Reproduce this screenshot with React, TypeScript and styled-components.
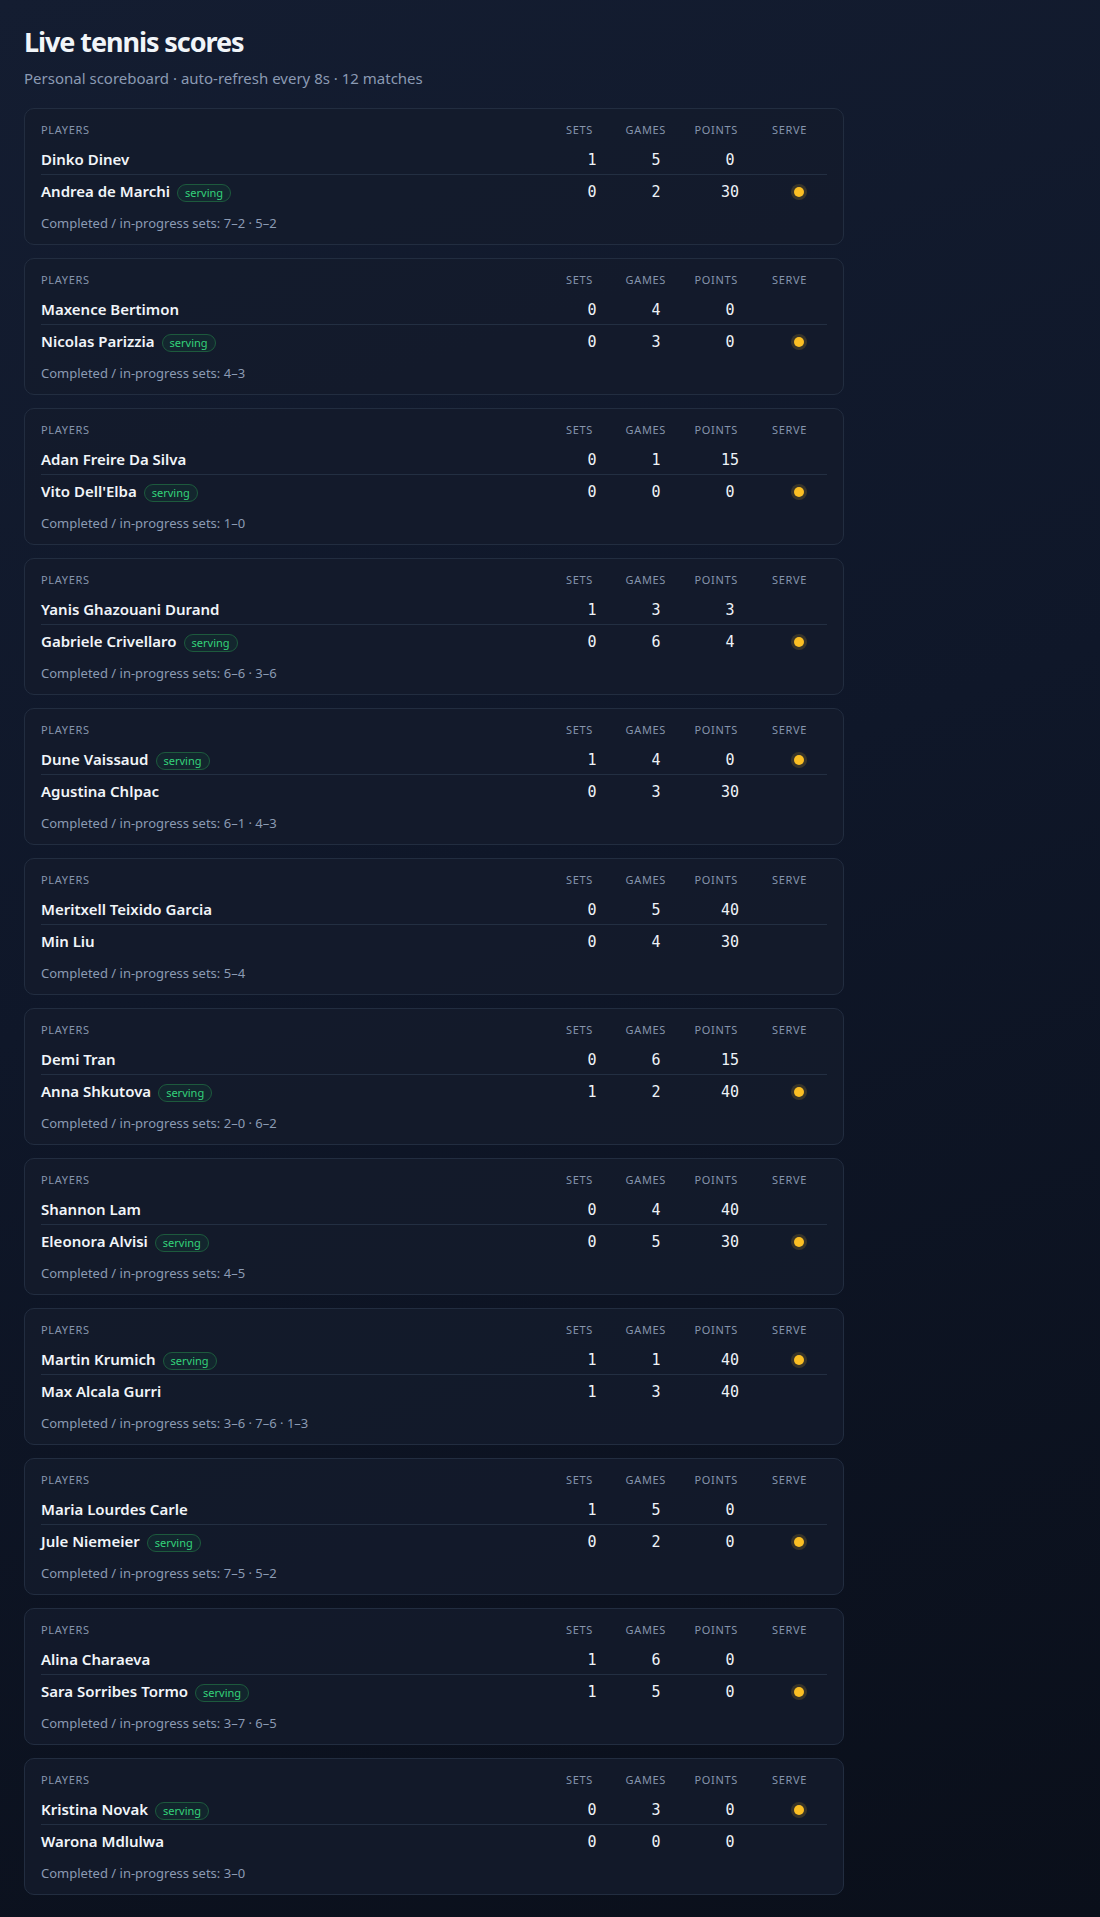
import styled, { createGlobalStyle } from "styled-components";

interface Player {
  name: string;
  sets: number;
  games: number;
  points: string;
  serving?: boolean;
}

interface Match {
  id: number;
  players: [Player, Player];
  setScores: string[];
}

const matches: Match[] = [
  {
    id: 1,
    players: [
      { name: "Dinko Dinev", sets: 1, games: 5, points: "0" },
      { name: "Andrea de Marchi", sets: 0, games: 2, points: "30", serving: true },
    ],
    setScores: ["7–2", "5–2"],
  },
  {
    id: 2,
    players: [
      { name: "Maxence Bertimon", sets: 0, games: 4, points: "0" },
      { name: "Nicolas Parizzia", sets: 0, games: 3, points: "0", serving: true },
    ],
    setScores: ["4–3"],
  },
  {
    id: 3,
    players: [
      { name: "Adan Freire Da Silva", sets: 0, games: 1, points: "15" },
      { name: "Vito Dell'Elba", sets: 0, games: 0, points: "0", serving: true },
    ],
    setScores: ["1–0"],
  },
  {
    id: 4,
    players: [
      { name: "Yanis Ghazouani Durand", sets: 1, games: 3, points: "3" },
      { name: "Gabriele Crivellaro", sets: 0, games: 6, points: "4", serving: true },
    ],
    setScores: ["6–6", "3–6"],
  },
  {
    id: 5,
    players: [
      { name: "Dune Vaissaud", sets: 1, games: 4, points: "0", serving: true },
      { name: "Agustina Chlpac", sets: 0, games: 3, points: "30" },
    ],
    setScores: ["6–1", "4–3"],
  },
  {
    id: 6,
    players: [
      { name: "Meritxell Teixido Garcia", sets: 0, games: 5, points: "40" },
      { name: "Min Liu", sets: 0, games: 4, points: "30" },
    ],
    setScores: ["5–4"],
  },
  {
    id: 7,
    players: [
      { name: "Demi Tran", sets: 0, games: 6, points: "15" },
      { name: "Anna Shkutova", sets: 1, games: 2, points: "40", serving: true },
    ],
    setScores: ["2–0", "6–2"],
  },
  {
    id: 8,
    players: [
      { name: "Shannon Lam", sets: 0, games: 4, points: "40" },
      { name: "Eleonora Alvisi", sets: 0, games: 5, points: "30", serving: true },
    ],
    setScores: ["4–5"],
  },
  {
    id: 9,
    players: [
      { name: "Martin Krumich", sets: 1, games: 1, points: "40", serving: true },
      { name: "Max Alcala Gurri", sets: 1, games: 3, points: "40" },
    ],
    setScores: ["3–6", "7–6", "1–3"],
  },
  {
    id: 10,
    players: [
      { name: "Maria Lourdes Carle", sets: 1, games: 5, points: "0" },
      { name: "Jule Niemeier", sets: 0, games: 2, points: "0", serving: true },
    ],
    setScores: ["7–5", "5–2"],
  },
  {
    id: 11,
    players: [
      { name: "Alina Charaeva", sets: 1, games: 6, points: "0" },
      { name: "Sara Sorribes Tormo", sets: 1, games: 5, points: "0", serving: true },
    ],
    setScores: ["3–7", "6–5"],
  },
  {
    id: 12,
    players: [
      { name: "Kristina Novak", sets: 0, games: 3, points: "0", serving: true },
      { name: "Warona Mdlulwa", sets: 0, games: 0, points: "0" },
    ],
    setScores: ["3–0"],
  },
];

const GlobalStyle = createGlobalStyle`
  * {
    box-sizing: border-box;
  }

  html,
  body {
    margin: 0;
    min-height: 100%;
    background: #0b1120;
  }

  body {
    font-family: "Noto Sans", "Open Sans", sans-serif;
    color: #e2e8f0;
    background: linear-gradient(160deg, #141d31 0%, #0f1729 45%, #0a0f1a 100%);
    min-height: 100vh;
  }
`;

const App = () => {
  return (
    <>
      <GlobalStyle />
      <Page>
        <Header>
          <Title>Live tennis scores</Title>
          <Subtitle>
            Personal scoreboard · auto-refresh every 8s · {matches.length} matches
          </Subtitle>
        </Header>

        <MatchList>
          {matches.map((match) => (
            <MatchCard key={match.id}>
              <HeadRow>
                <HeadCell $align="left">Players</HeadCell>
                <HeadCell>Sets</HeadCell>
                <HeadCell>Games</HeadCell>
                <HeadCell>Points</HeadCell>
                <HeadCell>Serve</HeadCell>
              </HeadRow>

              {match.players.map((player, i) => (
                <PlayerRow key={player.name} $divider={i === 0}>
                  <NameCell>
                    <PlayerName>{player.name}</PlayerName>
                    {player.serving && <ServingBadge>serving</ServingBadge>}
                  </NameCell>
                  <Score>{player.sets}</Score>
                  <Score>{player.games}</Score>
                  <Score>{player.points}</Score>
                  <ServeCell>{player.serving && <ServeDot />}</ServeCell>
                </PlayerRow>
              ))}

              <SetsLine>
                Completed / in-progress sets: {match.setScores.join(" · ")}
              </SetsLine>
            </MatchCard>
          ))}
        </MatchList>
      </Page>
    </>
  );
};

export default App;

const Page = styled.div`
  max-width: 868px;
  padding: 25px 24px 24px;
`;

const Header = styled.header`
  margin-bottom: 20px;
`;

const Title = styled.h1`
  margin: 0 0 9px;
  font-size: 27px;
  line-height: 34px;
  font-weight: 700;
  color: #f1f5f9;
  letter-spacing: -0.04em;
`;

const Subtitle = styled.p`
  margin: 0;
  font-size: 15px;
  line-height: 20px;
  color: #8b9ab3;
`;

const MatchList = styled.div`
  display: flex;
  flex-direction: column;
  gap: 13px;
`;

const MatchCard = styled.section`
  background: rgba(20, 27, 44, 0.85);
  border: 1px solid #222d40;
  border-radius: 10px;
  padding: 13px 16px 12px;
`;

/* headers sit right-aligned, scores are centred under them */
const HeadRow = styled.div`
  display: grid;
  grid-template-columns: 1fr 60px 73px 72px 69px;
  padding-right: 20px;
  margin-bottom: 5px;
`;

const HeadCell = styled.div<{ $align?: "left" | "right" }>`
  text-align: ${({ $align }) => $align ?? "right"};
  font-size: 11px;
  line-height: 16px;
  text-transform: uppercase;
  letter-spacing: 0.06em;
  color: #8695ad;
`;

const PlayerRow = styled.div<{ $divider?: boolean }>`
  display: grid;
  grid-template-columns: 1fr 64px 64px 84px 54px;
  align-items: baseline;
  padding: 6px 1px 4px 0;
  border-bottom: ${({ $divider }) => ($divider ? "1px solid #232f42" : "none")};
`;

const NameCell = styled.div`
  display: flex;
  align-items: baseline;
  gap: 7px;
  min-width: 0;
`;

const PlayerName = styled.span`
  font-size: 15px;
  line-height: 20px;
  font-weight: 600;
  color: #f1f5f9;
  white-space: nowrap;
`;

const ServingBadge = styled.span`
  font-size: 11px;
  line-height: 14px;
  padding: 1px 7px 1px;
  border: 1px solid #1d5a3d;
  border-radius: 999px;
  background: rgba(34, 197, 94, 0.07);
  color: #34d27a;
`;

const Score = styled.span`
  text-align: center;
  font-family: "DejaVu Sans Mono", "Liberation Mono", monospace;
  font-size: 15px;
  line-height: 20px;
  color: #eef2f7;
`;

const ServeCell = styled.div`
  display: flex;
  justify-content: center;
  align-self: center;
`;

const ServeDot = styled.span`
  width: 10px;
  height: 10px;
  border-radius: 50%;
  background: #fbbf24;
  box-shadow: 0 0 0 3px rgba(251, 191, 36, 0.16);
`;

const SetsLine = styled.p`
  margin: 8px 0 0;
  font-size: 13px;
  line-height: 18px;
  color: #8b9ab3;
`;
